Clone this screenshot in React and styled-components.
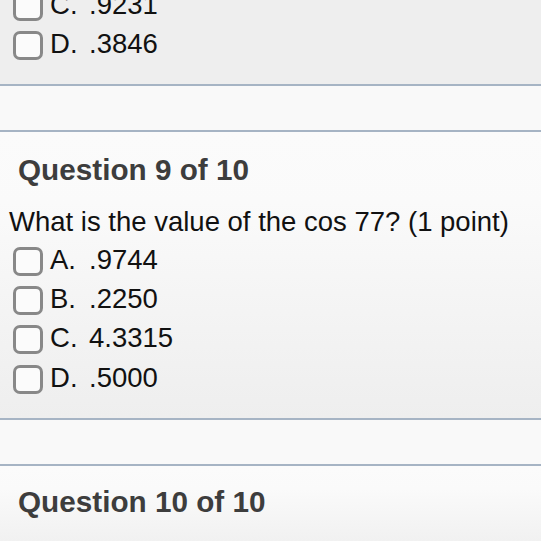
import React from "react";
import styled, { createGlobalStyle } from "styled-components";

const Global = createGlobalStyle`
  html, body { margin: 0; padding: 0; background: #eeeeee; overflow: hidden; }
  body { font-family: "Liberation Sans", Arial, Helvetica, sans-serif; }
`;

const Page = styled.div`
  width: 541px;
  height: 541px;
  overflow: hidden;
`;

const Panel = styled.section`
  background: ${(p) => (p.$plain ? "#eeeeee" : "linear-gradient(#fbfbfb, #fafafa 25%, #eeeeee)")};
  padding: ${(p) => p.$pad};
`;

const Spacer = styled.div`
  height: 44px;
  background: #f9f9f9;
  border-top: 2px solid #a6b4c4;
  border-bottom: 2px solid #a6b4c4;
`;

const Title = styled.h2`
  margin: 0 0 0 18px;
  font-size: 29.7px;
  line-height: 34px;
  font-weight: 700;
  color: #3d3d3d;
`;

const Prompt = styled.p`
  margin: 17px 0 0 9px;
  font-size: 27.5px;
  line-height: 36px;
  color: #111;
  white-space: nowrap;
`;

const Options = styled.ul`
  list-style: none;
  margin: ${(p) => p.$mt || "0"};
  padding: 0;
`;

const Option = styled.li`
  display: flex;
  align-items: center;
  height: 39.33px;
  padding-left: 13px;
  font-size: 27.5px;
  color: #111;
`;

const Box = styled.span`
  box-sizing: border-box;
  width: 30px;
  height: 29px;
  margin-top: 3px;
  border: 3px solid #888888;
  border-radius: 7px;
  background: #fbfbfb;
  flex: none;
`;

const Letter = styled.span`
  margin-left: 7px;
  width: 39px;
`;

const Choice = ({ letter, value }) => (
  <Option>
    <Box />
    <Letter>{letter}.</Letter>
    <span>{value}</span>
  </Option>
);

export default function App() {
  return (
    <Page>
      <Global />
      <Panel $plain $pad="0 0 20.5px 0">
        <Options $mt="-15px 0 0 0">
          <Choice letter="C" value=".9231" />
          <Choice letter="D" value=".3846" />
        </Options>
      </Panel>
      <Spacer />
      <Panel $pad="21px 0 21px 0">
        <Title>Question 9 of 10</Title>
        <Prompt>What is the value of the cos 77? (1 point)</Prompt>
        <Options>
          <Choice letter="A" value=".9744" />
          <Choice letter="B" value=".2250" />
          <Choice letter="C" value="4.3315" />
          <Choice letter="D" value=".5000" />
        </Options>
      </Panel>
      <Spacer />
      <Panel $pad="19px 0 40px 0">
        <Title>Question 10 of 10</Title>
      </Panel>
    </Page>
  );
}
